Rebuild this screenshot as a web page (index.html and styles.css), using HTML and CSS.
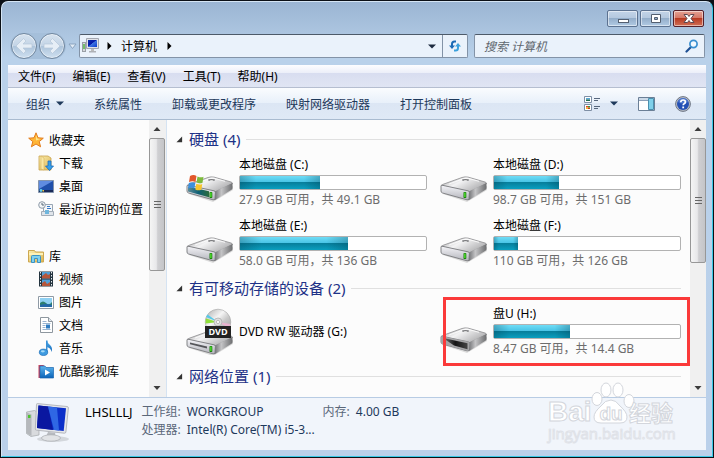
FILE: index.html
```html
<!DOCTYPE html>
<html lang="zh-CN">
<head>
    <meta charset="UTF-8">
    <meta name="viewport" content="width=device-width, initial-scale=1.0">
    <title>计算机</title>
    <link rel="stylesheet" href="styles.css">
</head>
<body>
    <!-- 共用图标 -->
    <svg class="sprites" width="0" height="0" aria-hidden="true">
        <defs>
            <linearGradient id="gTop" x1="0" y1="0" x2="1" y2="0.6">
                <stop offset="0" stop-color="#a2a2a4"/><stop offset="0.45" stop-color="#f3f3f4"/><stop offset="1" stop-color="#adadaf"/>
            </linearGradient>
            <linearGradient id="gFront" x1="0" y1="0" x2="0" y2="1">
                <stop offset="0" stop-color="#f4f4f8"/><stop offset="1" stop-color="#b3b4bb"/>
            </linearGradient>
            <linearGradient id="gSide" x1="0" y1="0" x2="1" y2="0">
                <stop offset="0" stop-color="#6a6b6e"/><stop offset="0.4" stop-color="#c4c4c6"/><stop offset="1" stop-color="#6d6e70"/>
            </linearGradient>
            <linearGradient id="gSys" x1="0" y1="0" x2="1" y2="0">
                <stop offset="0" stop-color="#5d8b96"/><stop offset="0.5" stop-color="#0e5f75"/><stop offset="1" stop-color="#2a6b3c"/>
            </linearGradient>
            <linearGradient id="gDark" x1="0" y1="0" x2="1" y2="0">
                <stop offset="0" stop-color="#777"/><stop offset="0.5" stop-color="#151515"/><stop offset="1" stop-color="#444"/>
            </linearGradient>
            <linearGradient id="gScreen" x1="0" y1="0" x2="1" y2="1">
                <stop offset="0" stop-color="#0a2fb0"/><stop offset="0.45" stop-color="#0618a8"/><stop offset="0.5" stop-color="#3f74e0"/><stop offset="1" stop-color="#0a3ad0"/>
            </linearGradient>
            <linearGradient id="gBlue" x1="0" y1="0" x2="0" y2="1">
                <stop offset="0" stop-color="#5cb4ee"/><stop offset="1" stop-color="#0a63b8"/>
            </linearGradient>
            <linearGradient id="gFolder" x1="0" y1="0" x2="1" y2="1">
                <stop offset="0" stop-color="#fbeeb0"/><stop offset="1" stop-color="#dcb452"/>
            </linearGradient>
            <linearGradient id="gDisc" x1="0" y1="0" x2="1" y2="1">
                <stop offset="0" stop-color="#a9a9a9"/><stop offset="0.4" stop-color="#f5f5f5"/><stop offset="0.6" stop-color="#c9c9c9"/><stop offset="1" stop-color="#999"/>
            </linearGradient>
        </defs>
        <symbol id="drive" viewBox="0 0 48 48">
            <path d="M3 36l24 8 20-12v-4z" fill="#000" opacity="0.13"/>
            <path d="M1 28q0-1 1.500-1.500L22 19.500q3-1 6-.4L45 24q1.500.5 1.500 1.500L29 34z" fill="url(#gTop)" stroke="#8b8b8e" stroke-width="0.800"/>
            <path d="M29 33.500L46.500 25v5q0 1-1 1.700L30 41.500q-1 .7-2 .5z" fill="url(#gSide)"/>
            <path d="M1 28q.3-1 2-.6l25 5.400q1.500.4 1.400 1.700l-.4 6q-.2 1.800-2 1.300L2.500 35Q1 34.500 1 33z" fill="url(#gFront)" stroke="#77787c" stroke-width="0.900"/>
            <path d="M9 26l15-5.500q2-.7 4-.2l11 3" fill="none" stroke="#fff" stroke-width="0.900" opacity="0.9"/>
            <ellipse cx="25.500" cy="22" rx="3.500" ry="1.100" fill="#7a7b7e"/>
            <ellipse cx="25.500" cy="22.400" rx="2" ry="0.500" fill="#ddd"/>
            <rect x="23.500" y="34" width="2.800" height="6" rx="0.800" fill="#167a0a"/>
            <rect x="24.300" y="34.600" width="1.200" height="4.500" fill="#5df235"/>
        </symbol>
        <symbol id="scrollup" viewBox="0 0 16 16"><path d="M4.500 10L8 6l3.500 4z" fill="#3c3c3c"/></symbol>
        <symbol id="scrolldown" viewBox="0 0 16 16"><path d="M4.500 6L8 10l3.500-4z" fill="#3c3c3c"/></symbol>
        <symbol id="open" viewBox="0 0 8 8"><path d="M7 0.500V7H0.500z" fill="#333"/></symbol>
    </svg>

    <div class="window">
        <header class="titlebar">
            <button class="win-btn" aria-label="最小化">
                <svg width="14" height="12" viewBox="0 0 14 12"><rect x="2.500" y="6.500" width="10" height="3" fill="#fff" stroke="#535f70"/></svg>
            </button>
            <button class="win-btn" aria-label="最大化">
                <svg width="14" height="12" viewBox="0 0 14 12"><path d="M2.500 1.500h9v8h-9zM5.500 4.500v2h3v-2z" fill="#fff" fill-rule="evenodd" stroke="#535f70"/></svg>
            </button>
            <button class="win-btn close" aria-label="关闭">
                <svg width="14" height="12" viewBox="0 0 14 12"><path d="M2 1.500h3.500L7 3.500l1.500-2H12L9 5.500l3 4H8.500L7 7.500l-1.500 2H2l3-4z" fill="#fff" stroke="#5f4a52"/></svg>
            </button>
        </header>

        <div class="nav">
            <div class="travel">
                <button class="round" aria-label="后退">
                    <svg width="26" height="26" viewBox="0 0 26 26"><path d="M5 13l7.500-7.500 2.500 2.500-3 3h9v4h-9l3 3-2.500 2.500z" fill="#e6eef6" stroke="#b4c6d8" stroke-width="0.700"/></svg>
                </button>
                <button class="round" aria-label="前进">
                    <svg width="26" height="26" viewBox="0 0 26 26"><path d="M21 13l-7.500-7.500-2.500 2.500 3 3H5v4h9l-3 3 2.500 2.500z" fill="#e6eef6" stroke="#b4c6d8" stroke-width="0.700"/></svg>
                </button>
            </div>
            <button class="history" aria-label="最近浏览的位置">
                <svg width="9" height="7" viewBox="0 0 9 7"><path d="M1 1h7L4.500 5.500z" fill="#e3ecf5" stroke="#8aa3bf"/></svg>
            </button>
            <div class="address">
                <svg width="18" height="16" viewBox="0 0 18 16">
                    <rect x="0.500" y="4.500" width="3" height="9" fill="#d5d8dc" stroke="#999fa6"/><rect x="1.300" y="6" width="1.400" height="5" fill="#4bb63b"/>
                    <path d="M4.500.5h12v10h-12z" fill="#e0e2e8" stroke="#a2a6b0"/><path d="M6 2h9v7H6z" fill="url(#gScreen)"/>
                    <path d="M9 11h3v2H9z" fill="#bbb"/><path d="M7 13h7v1.500H7z" fill="#aeb1b6"/>
                </svg>
                <svg class="crumb-arrow" width="5" height="8" viewBox="0 0 5 8"><path d="M.5 0l4 4-4 4z"/></svg>
                <a href="#">计算机</a>
                <svg class="crumb-arrow last" width="5" height="8" viewBox="0 0 5 8"><path d="M.5 0l4 4-4 4z"/></svg>
                <button class="drop" aria-label="历史位置">
                    <svg width="8" height="5" viewBox="0 0 8 5"><path d="M0 .5h8l-4 4z" fill="#1c2a3f"/></svg>
                </button>
                <button class="refresh" aria-label="刷新">
                    <svg width="14" height="14" viewBox="0 0 14 14" fill="none" stroke="#1c6bb5" stroke-width="2">
                        <path d="M8 2.500H6.500Q4 2.500 4 5v3"/><path d="M1 6.500h6L4 10z" fill="#1c6bb5" stroke="none"/>
                        <path d="M6 11.500h1.500Q10 11.500 10 9V6" stroke="#3ba0dc"/><path d="M7 7.500h6L10 4z" fill="#3ba0dc" stroke="none"/>
                    </svg>
                </button>
            </div>
            <label class="search">
                <input type="text" placeholder="搜索 计算机" aria-label="搜索 计算机">
                <svg width="14" height="14" viewBox="0 0 14 14"><path d="M1.500 12.500L6 8" stroke="#1d4f93" stroke-width="2.200" stroke-linecap="round"/><circle cx="8.500" cy="5" r="3.600" fill="#f4faff" stroke="#3a8fd0" stroke-width="1.700"/></svg>
            </label>
        </div>

        <div class="client">
            <nav class="menubar">
                <button>文件(F)</button>
                <button>编辑(E)</button>
                <button>查看(V)</button>
                <button>工具(T)</button>
                <button>帮助(H)</button>
            </nav>

            <div class="toolbar">
                <button>组织 <svg width="8" height="5" viewBox="0 0 8 5"><path d="M0 .5h8l-4 4z" fill="#1e395b"/></svg></button>
                <button>系统属性</button>
                <button>卸载或更改程序</button>
                <button>映射网络驱动器</button>
                <button>打开控制面板</button>
                <div class="tools">
                    <button class="view" aria-label="更改您的视图">
                        <svg width="17" height="16" viewBox="0 0 17 16">
                            <path d="M.5.5h7v6h-7zM.5 8.500h7v6h-7z" fill="#fff" stroke="#7e8fa5"/>
                            <path d="M2 2h4v1.500H2z" fill="#58a8d8"/><path d="M2 3.500h4V5H2z" fill="#1f6a50"/>
                            <path d="M2 10h2v1.500H2z" fill="#e03b2b"/><path d="M4 10h2v1.500H4z" fill="#2fa03a"/><path d="M2 11.500h2V13H2z" fill="#f0c020"/><path d="M4 11.500h2V13H4z" fill="#c83a20"/>
                            <path d="M10 2.500h6M10 4.500h4M10 10.500h6M10 12.500h4" stroke="#57677d"/>
                        </svg>
                        <svg width="8" height="5" viewBox="0 0 8 5"><path d="M0 .5h8l-4 4z" fill="#1e395b"/></svg>
                    </button>
                    <button aria-label="预览窗格">
                        <svg width="17" height="14" viewBox="0 0 17 14"><path d="M.5.5h16v13H.5z" fill="#fff" stroke="#6b7f96"/><path d="M1 1h15v2H1z" fill="#cbd9e8"/><path d="M1 3.500h9" stroke="#8ca0b8"/><path d="M10.500 1.500h5v11h-5z" fill="#7fd0ea" stroke="#4b8fae"/></svg>
                    </button>
                    <button aria-label="帮助">
                        <svg width="16" height="16" viewBox="0 0 16 16"><circle cx="8" cy="8" r="7.400" fill="#b9bec8" stroke="#6f7785"/><circle cx="8" cy="8" r="6" fill="#2450b4"/><path d="M3 6a5.200 5.200 0 0 1 10 0q-5 3-10 0z" fill="#6b93e0" opacity="0.6"/><path d="M5.800 6.200q0-2.200 2.300-2.200t2.300 2q0 1.100-1.300 1.800-.9.500-.9 1.500" fill="none" stroke="#fff" stroke-width="1.700"/><rect x="7.300" y="10.500" width="1.800" height="1.800" fill="#fff"/></svg>
                    </button>
                </div>
            </div>

            <div class="panes">
                <aside class="sidebar">
                    <ul class="tree">
                        <li><a href="#">
                            <svg width="16" height="16" viewBox="0 0 16 16"><path d="M8 .8l2 5 5.300.4-4.100 3.400 1.400 5.200L8 12l-4.600 2.800 1.400-5.200L.7 6.200 6 5.800z" fill="#ffb637" stroke="#e27c1c"/><path d="M8 3l1.200 3.600 3.300.3-4.500 1.600z" fill="#ffe58a"/></svg>收藏夹</a></li>
                        <li class="child"><a href="#">
                            <svg width="16" height="16" viewBox="0 0 16 16"><path d="M1 1h9l3 2v12H1z" fill="url(#gFolder)" stroke="#c9a24d" stroke-width="0.800"/><path d="M3 1l3 2v12l-3-1z" fill="#f9e8a4" stroke="#d0ab55" stroke-width="0.500"/><path d="M10 6h3v5h2.500l-4 4.500-4-4.500H10z" fill="#349fea" stroke="#1c69b8" stroke-width="0.800"/></svg>下载</a></li>
                        <li class="child"><a href="#">
                            <svg width="16" height="16" viewBox="0 0 16 16"><path d="M.5 2.500h15v12H.5z" fill="#1f4faa" stroke="#8494ab"/><path d="M1 3h14L1 11z" fill="#5f8ce0"/><path d="M1 12h14v2H1z" fill="#1a2a58"/><circle cx="3" cy="12.500" r="1.400" fill="#5ed0ef"/><path d="M4.500 12h1.500v1.500H4.500z" fill="#f0c84a"/></svg>桌面</a></li>
                        <li class="child"><a href="#">
                            <svg width="16" height="16" viewBox="0 0 16 16"><path d="M5.500 3.500h9v10h-9z" fill="#f4f7fa" stroke="#98a5b3"/><path d="M3.500 10.500h12v4h-12z" fill="#dfe4ea" stroke="#a3adb8"/><path d="M7 9h4v4H7z" fill="#6fb6dd"/><path d="M9 5.500h3M9 7.500h4" stroke="#3478c8"/><circle cx="4" cy="4" r="3.300" fill="#f3f6f8" stroke="#8e9aa8"/><path d="M4 2v2h2" fill="none" stroke="#567"/></svg>最近访问的位置</a></li>
                    </ul>
                    <ul class="tree">
                        <li><a href="#">
                            <svg width="16" height="16" viewBox="0 0 16 16"><path d="M.5 2.500h6l1 1.500h8v10h-15z" fill="url(#gFolder)" stroke="#cda850"/><path d="M1 5h14v2H1z" fill="#fff2b8"/><path d="M3.500 14.500V8.500q0-1 1-1h7q1 0 1 1v6h-3v-4h-3v4z" fill="#7fd0ee" stroke="#3a93c6"/></svg>库</a></li>
                        <li class="child"><a href="#">
                            <svg width="16" height="16" viewBox="0 0 16 16"><path d="M1 .5h14v15H1z" fill="#24343f"/><path d="M4 1h8v6.500H4zM4 8.500h8V15H4z" fill="#4f9fd8"/><path d="M4 5l4-3 2 2 2-1v4.500H4zM4 12l3-2 2 3 3-2v4H4z" fill="#b5563a"/><path d="M2.500 1v15M13.500 1v15" stroke="#e8eef2" stroke-dasharray="1.500 1.500"/></svg>视频</a></li>
                        <li class="child"><a href="#">
                            <svg width="16" height="16" viewBox="0 0 16 16"><path d="M.5 2.500h15v12H.5z" fill="#fff" stroke="#8f9aa5"/><path d="M2 4h12v9H2z" fill="#8fd0f2"/><path d="M2 9q3-3 6 0t6-1v5H2z" fill="#2d7f70"/><path d="M2 11q6-2 12 0v2H2z" fill="#2568a8"/></svg>图片</a></li>
                        <li class="child"><a href="#">
                            <svg width="16" height="16" viewBox="0 0 16 16"><path d="M2.500.5h8l4 4v11h-12z" fill="#fff" stroke="#8e979f"/><path d="M10.500.5v4h4" fill="#dfe6ec" stroke="#8e979f"/><path d="M4.500 4.500h4M4.500 6.500h8M4.500 8.500h3M4.500 10.500h3M4.500 12.500h8" stroke="#98b4d0"/><path d="M8 7.500h4v4H8z" fill="#2f7cc2"/></svg>文档</a></li>
                        <li class="child"><a href="#">
                            <svg width="16" height="16" viewBox="0 0 16 16"><path d="M9 .5q.5 3 3 4.500 3 2.500 1.500 7-.5-4-4.500-5z" fill="url(#gBlue)"/><path d="M8 .5h1.500v12H8z" fill="#3a91d8"/><ellipse cx="5.500" cy="12.300" rx="4.200" ry="3.200" fill="#3f9be0" stroke="#1d6fb8" stroke-width="0.700"/><ellipse cx="4.800" cy="11.300" rx="2" ry="1.100" fill="#a5daf8"/></svg>音乐</a></li>
                        <li class="child"><a href="#">
                            <svg width="16" height="16" viewBox="0 0 16 16"><path d="M.5 2h5l1 2v11h-6z" fill="#c8405a"/><path d="M2 3h5l1 1.500h7.500V15H2z" fill="url(#gBlue)" stroke="#1b66b0" stroke-width="0.700"/><path d="M7 6.500l5 3-5 3z" fill="#fff"/></svg>优酷影视库</a></li>
                    </ul>
                </aside>
                <div class="scrollbar side-scroll">
                    <button aria-label="向上滚动"><svg width="16" height="16"><use href="#scrollup"/></svg></button>
                    <div class="track"><div class="thumb"></div></div>
                    <button aria-label="向下滚动"><svg width="16" height="16"><use href="#scrolldown"/></svg></button>
                </div>

                <main class="content">
                    <section class="group">
                        <h2><svg width="7" height="7"><use href="#open"/></svg>硬盘 (4)</h2>
                        <div class="drives">
                            <div class="drive">
                                <svg class="icon" width="48" height="48" viewBox="0 0 48 48">
                                    <use href="#drive"/>
                                    <path d="M2 28.500l21 4.800v6L2 33.500z" fill="url(#gSys)"/>
                                    <path d="M4 18q3.500-2 6.500 0L9.500 24q-3-1.500-6.500 0z" fill="#e2572b"/>
                                    <path d="M11.500 18.500q3.500 1.600 6 .2l-1 6q-3 1.300-6-.2z" fill="#7dba3c"/>
                                    <path d="M2.800 25q3.500-1.700 6.500 0l-1 5.500q-3-1.700-6.300 0z" fill="#3c8fdc"/>
                                    <path d="M10.300 25.700q3 1.500 6 .2l-1 5.800q-3 1.400-6-.2z" fill="#f7c52d"/>
                                </svg>
                                <div class="info">
                                    <div class="name">本地磁盘 (C:)</div>
                                    <div class="bar"><div class="fill" style="width: 43%"></div></div>
                                    <div class="space">27.9 GB 可用，共 49.1 GB</div>
                                </div>
                            </div>
                            <div class="drive">
                                <svg class="icon" width="48" height="48"><use href="#drive"/></svg>
                                <div class="info">
                                    <div class="name">本地磁盘 (D:)</div>
                                    <div class="bar"><div class="fill" style="width: 35%"></div></div>
                                    <div class="space">98.7 GB 可用，共 151 GB</div>
                                </div>
                            </div>
                            <div class="drive">
                                <svg class="icon" width="48" height="48"><use href="#drive"/></svg>
                                <div class="info">
                                    <div class="name">本地磁盘 (E:)</div>
                                    <div class="bar"><div class="fill" style="width: 58%"></div></div>
                                    <div class="space">58.0 GB 可用，共 136 GB</div>
                                </div>
                            </div>
                            <div class="drive">
                                <svg class="icon" width="48" height="48"><use href="#drive"/></svg>
                                <div class="info">
                                    <div class="name">本地磁盘 (F:)</div>
                                    <div class="bar"><div class="fill" style="width: 13%"></div></div>
                                    <div class="space">110 GB 可用，共 126 GB</div>
                                </div>
                            </div>
                        </div>
                    </section>

                    <section class="group">
                        <h2><svg width="7" height="7"><use href="#open"/></svg>有可移动存储的设备 (2)</h2>
                        <div class="drives">
                            <div class="drive">
                                <svg class="icon" width="48" height="48" viewBox="0 0 48 48">
                                    <use href="#drive" y="5"/>
                                    <path d="M4 35.500l17 4v2l-17-4.300z" fill="#55565a"/>
                                    <circle cx="32" cy="15" r="12.800" fill="url(#gDisc)" stroke="#a5a5a5" stroke-width="0.600"/>
                                    <path d="M32 15L19.800 11.500l-.3 5z" fill="#8fe03a"/><path d="M32 15L20 10l1.500-2.500z" fill="#58c8e8"/>
                                    <path d="M32 15l12.500 2-1.500 4z" fill="#e9b3cf"/>
                                    <circle cx="32" cy="15" r="4" fill="#dedede" stroke="#aaa" stroke-width="0.700"/><circle cx="32" cy="15" r="1.600" fill="#fff" stroke="#999" stroke-width="0.600"/>
                                    <rect x="19" y="19" width="26" height="12" fill="#222"/>
                                    <text class="dvd" x="32" y="28" text-anchor="middle">DVD</text>
                                </svg>
                                <div class="info solo">
                                    <div class="name">DVD RW 驱动器 (G:)</div>
                                </div>
                            </div>
                            <div class="drive marked">
                                <svg class="icon" width="48" height="48" viewBox="0 0 48 48">
                                    <use href="#drive" y="2"/>
                                    <path d="M1 30q.3-1 2-.6l25 5.400q1.500.4 1.400 1.700l-.4 6q-.2 1.800-2 1.300L2.500 37Q1 36.500 1 35z" fill="#a5a5a7"/>
                                    <path d="M3 31l24.500 5.200v6L14 38.500z" fill="url(#gDark)"/>
                                </svg>
                                <div class="info">
                                    <div class="name">盘U (H:)</div>
                                    <div class="bar"><div class="fill" style="width: 41%"></div></div>
                                    <div class="space">8.47 GB 可用，共 14.4 GB</div>
                                </div>
                            </div>
                        </div>
                    </section>

                    <section class="group">
                        <h2><svg width="7" height="7"><use href="#open"/></svg>网络位置 (1)</h2>
                    </section>
                </main>
                <div class="scrollbar main-scroll">
                    <button aria-label="向上滚动"><svg width="16" height="16"><use href="#scrollup"/></svg></button>
                    <div class="track"><div class="thumb"></div></div>
                    <button aria-label="向下滚动"><svg width="16" height="16"><use href="#scrolldown"/></svg></button>
                </div>
            </div>

            <footer class="details">
                <svg width="44" height="40" viewBox="0 0 44 40">
                    <ellipse cx="27" cy="36" rx="16" ry="3" fill="#000" opacity="0.12"/>
                    <path d="M.5 9l8-1.500L13 10v22l-8 1.500-4.500-3z" fill="#d9dbde" stroke="#a4a7ab" stroke-width="0.700"/>
                    <path d="M1 9.500l4.500 2v21.500L1 30.500z" fill="#b5b8bc"/><rect x="2" y="12" width="2.500" height="3" fill="#4bc42f"/>
                    <path d="M10.500 1.500q0-1 1-.9L41 3.500q1.500.2 1.400 1.500l-2.500 24q-.2 1.300-1.500 1.200l-28-3q-1.200-.2-1.100-1.300z" fill="#e3e5e9" stroke="#a8abb1" stroke-width="0.800"/>
                    <path d="M12.500 2.500L40 5.200 37.700 28 11 25z" fill="#0b2fc9"/>
                    <path d="M12.500 2.500L22 3.400 27 27 11 25z" fill="#0a17a0"/>
                    <path d="M22 3.400l9 1L33 27.500l-5-.5z" fill="#2f67e4"/>
                    <path d="M22 29l7 .7.500 4H20z" fill="#b7babf"/><ellipse cx="25" cy="35" rx="9.500" ry="3.200" fill="#e1e3e6" stroke="#a7aaaf" stroke-width="0.700"/>
                </svg>
                <strong class="host">LHSLLLJ</strong>
                <dl>
                    <div><dt>工作组:</dt><dd>WORKGROUP</dd></div>
                    <div><dt>内存:</dt><dd>4.00 GB</dd></div>
                    <div><dt>处理器:</dt><dd>Intel(R) Core(TM) i5-3...</dd></div>
                </dl>
            </footer>
        </div>

        <svg class="watermark" width="130" height="66" viewBox="0 0 130 66" aria-hidden="true">
            <text class="wm-logo" x="2" y="40">Bai</text>
            <g class="wm-paw">
                <ellipse cx="51" cy="18" rx="5" ry="6.500"/><ellipse cx="60" cy="9" rx="5" ry="7"/><ellipse cx="72" cy="9" rx="5" ry="7"/><ellipse cx="83" cy="20" rx="5" ry="6.500"/>
                <path d="M65 19q5 0 9 6 7 6 7 11 0 6-7 6H55q-7 0-7-6 0-5 7-11 4-6 10-6z"/>
            </g>
            <text class="wm-du" x="65" y="39" text-anchor="middle">du</text>
            <text class="wm-cn" x="83" y="40">经验</text>
            <text class="wm-url" x="2" y="58">jingyan.baidu.com</text>
        </svg>
    </div>
</body>
</html>
```
FILE: styles.css
```css
* {
    box-sizing: border-box;
}

body {
    margin: 0;
    padding: 1px;
    min-height: 100vh;
    display: flex;
    background: #0b1016;
    font-family: "Noto Sans", "Noto Sans CJK SC", sans-serif;
    font-size: 12px;
    color: #000;
}

button {
    border: none;
    padding: 0;
    background: none;
    font: inherit;
    color: inherit;
    cursor: pointer;
}

svg {
    display: block;
    flex: none;
}

a {
    color: inherit;
    text-decoration: none;
}

.sprites {
    position: absolute;
}

.window {
    position: relative;
    flex: 1;
    min-width: 0;
    display: flex;
    flex-direction: column;
    padding: 0 6px 6px;
    border: 1px solid #d5e5f4;
    border-right-color: #38c8e6;
    border-bottom-color: #38c8e6;
    border-radius: 7px 7px 0 0;
    background: linear-gradient(#9bb5d3 0, #b9d1ea 56px, #bad0ea 100%);
}

/* 标题栏 */
.titlebar {
    display: flex;
    justify-content: flex-end;
    gap: 2px;
    height: 32px;
    padding: 8px 2px 0 0;
}

.win-btn {
    display: flex;
    align-items: center;
    justify-content: center;
    width: 31px;
    height: 17px;
    border: 1px solid #5c7290;
    border-radius: 2px;
    background: linear-gradient(#c3d4e8 0, #b4c8de 48%, #94aeca 50%, #b1cae4 100%);
    box-shadow: inset 0 0 0 1px rgba(255, 255, 255, 0.5);
}

.win-btn.close {
    border-color: #54202a;
    background: linear-gradient(#e5a294 0, #d47564 48%, #b83a22 50%, #d06f56 100%);
}

/* 地址栏 */
.nav {
    display: flex;
    align-items: center;
    height: 24px;
    padding-right: 1px;
}

.travel {
    display: flex;
    gap: 2px;
    margin-left: 2px;
    padding: 0 1px;
    border-radius: 14px;
    background: #a5bfda;
}

.round {
    width: 26px;
    height: 26px;
    border: 1px solid #71879f;
    border-radius: 50%;
    background: linear-gradient(#d7e3ef 0, #c3d4e6 49%, #adc4db 51%, #cfe0f0 100%);
    box-shadow: inset 0 0 0 1px rgba(255, 255, 255, 0.5);
}

.round svg {
    margin: -1px;
}

.history {
    width: 13px;
    padding-left: 2px;
}

.address,
.search {
    display: flex;
    align-items: center;
    height: 24px;
    border: 1px solid #8393a7;
    border-top-color: #4d5a69;
    border-radius: 2px;
    background: #eaf2fb;
}

.address {
    flex: 1;
    padding-left: 2px;
}

.crumb-arrow {
    margin: 0 9px 0 7px;
}

.crumb-arrow.last {
    margin-left: 10px;
}

.drop {
    margin-left: auto;
    padding: 8px 6px;
}

.refresh {
    display: flex;
    align-items: center;
    height: 22px;
    padding: 0 5px;
    border-left: 1px solid #8393a7;
}

.search {
    flex: 0 1 231px;
    margin-left: 6px;
    padding: 0 5px 0 9px;
}

.search input {
    flex: 1;
    min-width: 0;
    padding: 0;
    border: none;
    outline: none;
    background: none;
    font: inherit;
    font-style: italic;
}

.search input::placeholder {
    color: #60676f;
}

/* 客户区 */
.client {
    flex: 1;
    display: flex;
    flex-direction: column;
    margin-top: 7px;
    background: #fcfcfc;
}

.menubar {
    display: flex;
    gap: 17px;
    height: 23px;
    padding: 0 10px;
    border-bottom: 1px solid #b5bed0;
    background: linear-gradient(#fdfdff 0, #eceff9 35%, #d8ddf0 36%, #e0e5f3 100%);
}

.toolbar {
    display: flex;
    align-items: center;
    gap: 30px;
    height: 32px;
    padding: 0 15px 0 18px;
    border-bottom: 1px solid #a9bbd0;
    background: linear-gradient(#fafcfe 0, #e8f0fa 48%, #dce6f4 50%, #dfe9f6 100%);
    color: #1e395b;
}

.toolbar button {
    display: flex;
    align-items: center;
    gap: 6px;
}

.tools {
    display: flex;
    align-items: center;
    gap: 20px;
    margin-left: auto;
}

.tools .view {
    gap: 9px;
}

.panes {
    flex: 1;
    display: flex;
}

/* 导航窗格 */
.sidebar {
    display: flex;
    flex-direction: column;
    gap: 24px;
    width: 141px;
    padding: 8px 0 14px 20px;
}

.tree {
    list-style: none;
    margin: 0;
    padding: 0;
}

.tree a {
    display: flex;
    align-items: center;
    gap: 5px;
    height: 23px;
    white-space: nowrap;
}

.tree .child {
    padding-left: 10px;
}

.scrollbar {
    display: flex;
    flex-direction: column;
    flex: none;
    width: 16px;
    background: #f0f0f0;
}

.scrollbar button {
    padding: 1px 0;
}

.side-scroll {
    width: 18px;
    padding-right: 1px;
    border-right: 1px solid #d5e3f2;
}

.track {
    flex: 1;
}

.thumb {
    height: 52%;
    border: 1px solid #979797;
    border-radius: 2px;
    background:
        repeating-linear-gradient(#666 0 1px, transparent 1px 3px) center / 7px 7px no-repeat,
        linear-gradient(90deg, #f5f5f5 0, #e8e8ea 45%, #cfcfd2 55%, #c4c5c8 100%);
}

.side-scroll .thumb {
    height: 55%;
}

/* 内容 */
.content {
    flex: 1;
    min-width: 0;
    padding: 7px 9px 9px;
}

.group {
    margin-bottom: 5px;
}

.group:last-child {
    margin-bottom: 0;
}

.group h2 {
    display: flex;
    align-items: center;
    gap: 6px;
    height: 24px;
    margin: 0;
    font-size: 15px;
    line-height: 22px;
    font-weight: normal;
    color: #1e3287;
}

.group h2::after {
    content: "";
    flex: 1;
    height: 1px;
    background: #e0e0e0;
}

.drives {
    display: grid;
    grid-template-columns: repeat(auto-fill, minmax(240px, 1fr));
    gap: 5px 13px;
    margin-top: 3px;
    padding-left: 10px;
}

.drive {
    position: relative;
    display: flex;
    gap: 5px;
    min-height: 56px;
}

.icon {
    margin-top: 4px;
}

.dvd {
    font: bold 9px "Open Sans", sans-serif;
    fill: #fff;
}

.info {
    flex: 1;
    min-width: 0;
}

.info.solo {
    align-self: center;
}

.name {
    line-height: 21px;
}

.bar {
    height: 15px;
    border: 1px solid #b2b2b2;
    border-radius: 2px;
    background: #fff;
}

.fill {
    height: 100%;
    background:
        linear-gradient(90deg, rgba(0, 60, 80, 0.3), transparent 20%, transparent 80%, rgba(0, 60, 80, 0.3)),
        linear-gradient(#6fdcf6 0, #48c4e6 46%, #077f9c 50%, #0a9fc0 100%);
}

.space {
    line-height: 20px;
    color: #6d6d6d;
}

.marked::after {
    content: "";
    position: absolute;
    inset: -6px -9px -7px 3px;
    border: 3px solid #fb3a3a;
}

/* 详细信息 */
.details {
    display: flex;
    align-items: flex-start;
    padding: 5px 18px;
    min-height: 53px;
    border-top: 1px solid #b8cce4;
    background: #f1f5fb;
    color: #1e395b;
}

.host {
    margin-left: 15px;
    font-size: 13px;
    font-weight: normal;
    line-height: 18px;
    color: #000;
}

.details dl {
    display: grid;
    grid-template-columns: 181px auto;
    margin: 0 0 0 9px;
    line-height: 18px;
    white-space: nowrap;
}

.details dl div {
    display: flex;
    gap: 6px;
}

.details dt {
    color: #5a6779;
}

.details dd {
    margin: 0;
}

/* 水印 */
.watermark {
    position: absolute;
    right: 36px;
    bottom: 9px;
    fill: #fff;
    stroke: #d3d6dc;
    stroke-width: 1;
}

.wm-logo {
    font: bold 28px "Liberation Sans", sans-serif;
}

.wm-du {
    font: bold 19px "Liberation Sans", sans-serif;
}

.wm-cn {
    font: bold 22px "Noto Sans CJK SC", sans-serif;
}

.wm-url {
    font: 15px "Open Sans", sans-serif;
    stroke: #dfe2e8;
}
```
